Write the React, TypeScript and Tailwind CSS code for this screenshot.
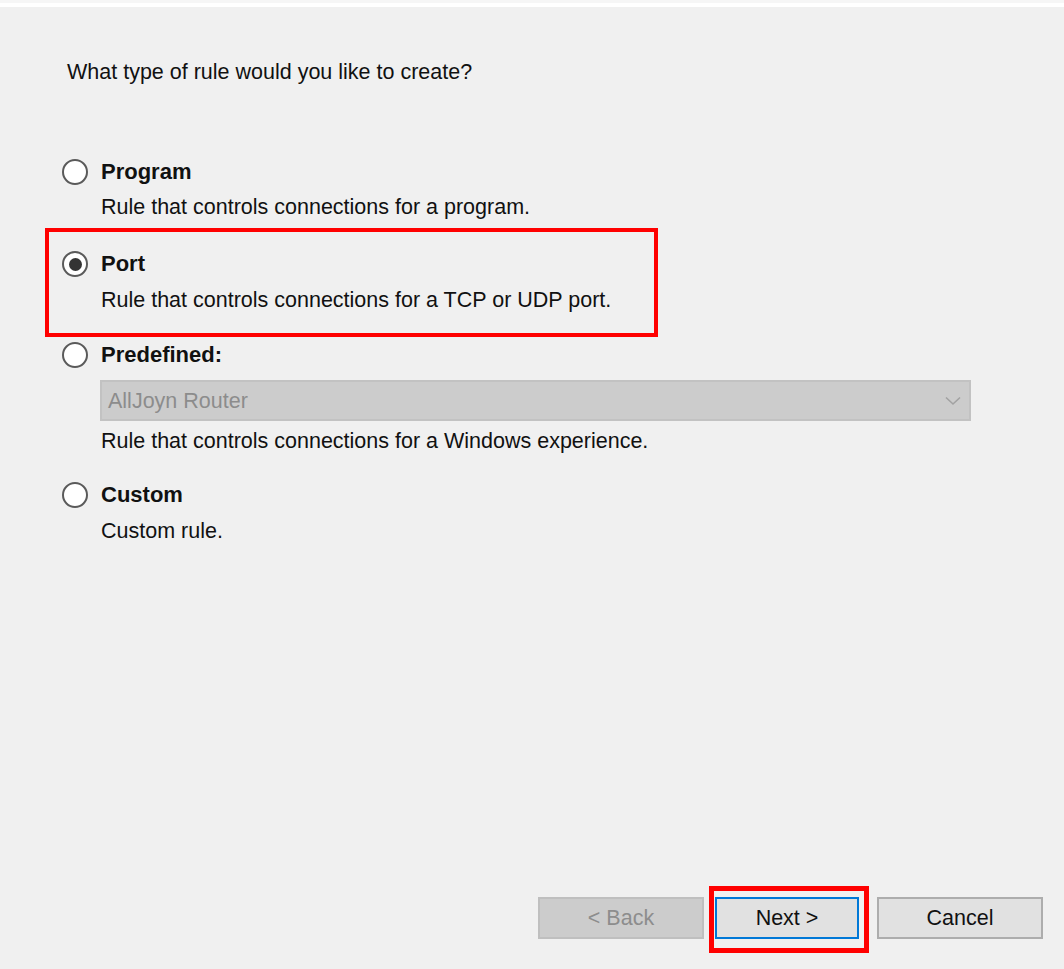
import React from "react";

const font = { fontFamily: '"Liberation Sans", Arial, sans-serif' };

function Radio({ checked = false }: { checked?: boolean }) {
  return (
    <span className="flex h-[26px] w-[26px] shrink-0 items-center justify-center rounded-full border-2 border-[#5a5a5a] bg-white">
      {checked && <span className="h-[13px] w-[13px] rounded-full bg-[#333333]" />}
    </span>
  );
}

function OptionTitle({ label, checked }: { label: string; checked?: boolean }) {
  return (
    <div className="flex h-[24px] items-center gap-[13px]">
      <Radio checked={checked} />
      <span className="text-[22px] font-bold leading-[24px] text-[#111]">{label}</span>
    </div>
  );
}

function Desc({ children, className = "" }: { children: React.ReactNode; className?: string }) {
  return <p className={`ml-[39px] text-[21.5px] leading-[22px] text-[#111] ${className}`}>{children}</p>;
}

export default function App() {
  return (
    <div className="flex h-[969px] w-[1064px] flex-col bg-[#f0f0f0]" style={font}>
      <div className="h-[3px] bg-[#f6f6f6]" />
      <div className="h-[4px] bg-white" />

      <p className="ml-[67px] mt-[53px] text-[21.5px] leading-[24px] text-[#111]">
        What type of rule would you like to create?
      </p>

      <div className="mt-[76px] flex flex-col pl-[62px]">
        {/* Program */}
        <div>
          <OptionTitle label="Program" />
          <Desc className="mt-[12px]">Rule that controls connections for a program.</Desc>
        </div>

        {/* Port (highlighted) */}
        <div className="-ml-[17px] mt-[10px] w-[613px] border-4 border-[#ff0000] pb-[22px] pl-[13px] pt-[20px]">
          <OptionTitle label="Port" checked />
          <Desc className="mt-[13px]">Rule that controls connections for a TCP or UDP port.</Desc>
        </div>

        {/* Predefined */}
        <div className="mt-[6px]">
          <OptionTitle label="Predefined:" />
          <div className="ml-[38px] mt-[13px] flex h-[41px] w-[871px] items-center justify-between border-2 border-[#c2c2c2] bg-[#cccccc] pl-[6px] pr-[8px]">
            <span className="text-[21.5px] leading-[24px] text-[#8c8c8c]">AllJoyn Router</span>
            <svg width="16" height="10" viewBox="0 0 16 10" fill="none">
              <path d="M1 1.5 L8 8 L15 1.5" stroke="#a2a2a2" strokeWidth="1.6" />
            </svg>
          </div>
          <Desc className="mt-[9px]">Rule that controls connections for a Windows experience.</Desc>
        </div>

        {/* Custom */}
        <div className="mt-[31px]">
          <OptionTitle label="Custom" />
          <Desc className="mt-[13px]">Custom rule.</Desc>
        </div>
      </div>

      <div className="mb-[30px] mt-auto flex justify-end pr-[21px]">
        <button className="flex h-[42px] w-[166px] items-center justify-center border-2 border-[#bfbfbf] bg-[#cccccc] text-[21.5px] text-[#8d8d8d]">
          &lt; Back
        </button>
        <div className="relative ml-[11px]">
          <button className="flex h-[42px] w-[144px] items-center justify-center border-2 border-[#0078d7] bg-[#e1e1e1] text-[21.5px] text-[#111]">
            Next &gt;
          </button>
          <div className="pointer-events-none absolute -left-[6px] -top-[11px] h-[67px] w-[160px] border-[5px] border-[#ff0000]" />
        </div>
        <button className="ml-[18px] flex h-[42px] w-[166px] items-center justify-center border-2 border-[#adadad] bg-[#e1e1e1] text-[21.5px] text-[#111]">
          Cancel
        </button>
      </div>
    </div>
  );
}
